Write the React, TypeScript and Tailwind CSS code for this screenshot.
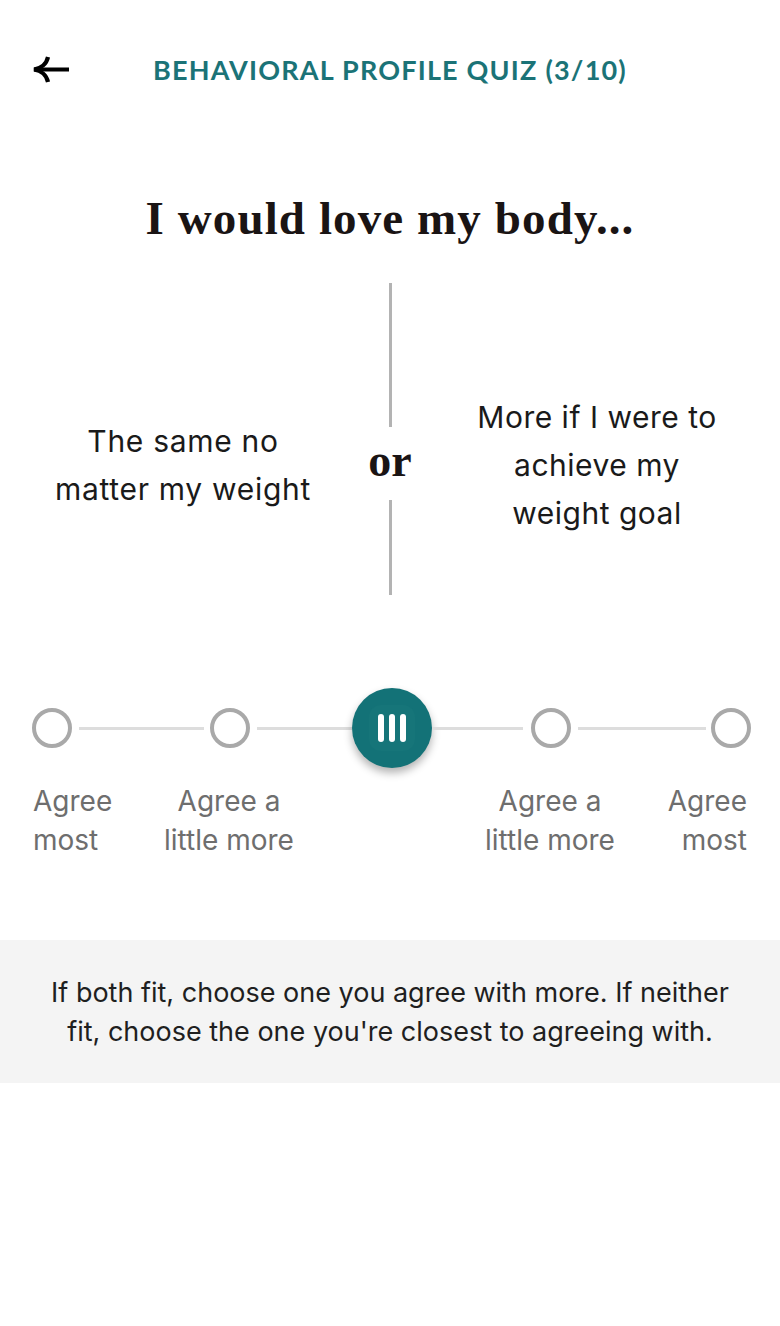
import React from "react";

const sans = { fontFamily: "Inter, 'Noto Sans', sans-serif" };

function Circle() {
  return <div className="w-[40px] h-[40px] rounded-full border-[4px] border-[#a9a9a9] bg-white shrink-0" />;
}

export default function App() {
  return (
    <div className="w-[780px] min-h-[1326px] bg-white flex flex-col">
      {/* Header */}
      <div className="relative h-[50px] mt-[44px] flex items-center justify-center">
        <button className="absolute left-[31px] top-[12px]">
          <svg width="40" height="28" viewBox="0 0 40 28" fill="none">
            <path d="M3 13.5 H38" stroke="#000" strokeWidth="4.2" />
            <path d="M17 1 C15.5 8 10 12.5 3 13.5 C10 14.5 15.5 19 17 26" stroke="#000" strokeWidth="4.2" fill="none" />
          </svg>
        </button>
        <div
          className="text-[27px] font-bold text-[#1b7377] tracking-[1.2px] leading-none"
          style={{ fontFamily: "Lato, sans-serif" }}
        >
          BEHAVIORAL PROFILE QUIZ (3/10)
        </div>
      </div>

      {/* Question */}
      <h1
        className="mt-[98px] text-center text-[47px] leading-[52px] font-bold tracking-[1.1px] text-[#1a1414]"
        style={{ fontFamily: "'Liberation Serif', serif" }}
      >
        I would love my body...
      </h1>

      {/* Choices */}
      <div className="mt-[39px] grid grid-cols-[366px_48px_366px]">
        <div className="flex items-center justify-center pt-[52px]">
          <p className="text-center text-[30px] leading-[48px] tracking-[0.7px] text-[#1a1a1a]" style={sans}>
            The same no
            <br />
            matter my weight
          </p>
        </div>
        <div className="flex flex-col items-center">
          <div className="w-[3px] h-[144px] bg-[#b3b3b3]" />
          <div className="h-[73px] flex items-center justify-center">
            <span
              className="text-[46px] font-bold leading-none text-[#1a1414] -mt-[6px]"
              style={{ fontFamily: "'Liberation Serif', serif" }}
            >
              or
            </span>
          </div>
          <div className="w-[3px] h-[95px] bg-[#b3b3b3]" />
        </div>
        <div className="flex items-center justify-center pt-[52px]">
          <p className="text-center text-[30px] leading-[48px] tracking-[0.5px] text-[#1a1a1a]" style={sans}>
            More if I were to
            <br />
            achieve my
            <br />
            weight goal
          </p>
        </div>
      </div>

      {/* Slider */}
      <div className="mt-[93px] h-[80px] flex items-center pl-[32px]">
        <Circle />
        <div className="ml-[7px] mr-[6px] w-[125px] h-[3px] bg-[#dddddd]" />
        <Circle />
        <div className="ml-[7px] w-[95px] h-[3px] bg-[#dddddd]" />
        <div className="w-[80px] h-[80px] rounded-full bg-[#137277] shadow-[0_5px_9px_rgba(0,0,0,0.3)] flex items-center justify-center shrink-0">
          <div className="w-[46px] h-[46px] rounded-[12px] bg-[#167579] flex items-center justify-center gap-[5px]">
            <div className="w-[6px] h-[28px] rounded-full bg-white" />
            <div className="w-[6px] h-[28px] rounded-full bg-white" />
            <div className="w-[6px] h-[28px] rounded-full bg-white" />
          </div>
        </div>
        <div className="mr-[8px] w-[91px] h-[3px] bg-[#dddddd]" />
        <Circle />
        <div className="ml-[7px] mr-[5px] w-[128px] h-[3px] bg-[#dddddd]" />
        <Circle />
      </div>

      {/* Labels */}
      <div
        className="mt-[14px] flex pl-[33px] text-[28px] leading-[39px] text-[#6e6e6e]"
        style={sans}
      >
        <div className="w-[100px] text-left">
          Agree
          <br />
          most
        </div>
        <div className="ml-[6px] w-[180px] text-center">
          Agree a
          <br />
          little more
        </div>
        <div className="w-[141px]" />
        <div className="w-[180px] text-center">
          Agree a
          <br />
          little more
        </div>
        <div className="w-[7px]" />
        <div className="w-[100px] text-right">
          Agree
          <br />
          most
        </div>
      </div>

      {/* Hint */}
      <div className="mt-[80px] bg-[#f4f4f4] h-[143px] flex items-center justify-center">
        <p className="text-center text-[27px] leading-[39px] text-[#1f1f1f]" style={sans}>
          If both fit, choose one you agree with more. If neither
          <br />
          fit, choose the one you're closest to agreeing with.
        </p>
      </div>
    </div>
  );
}
